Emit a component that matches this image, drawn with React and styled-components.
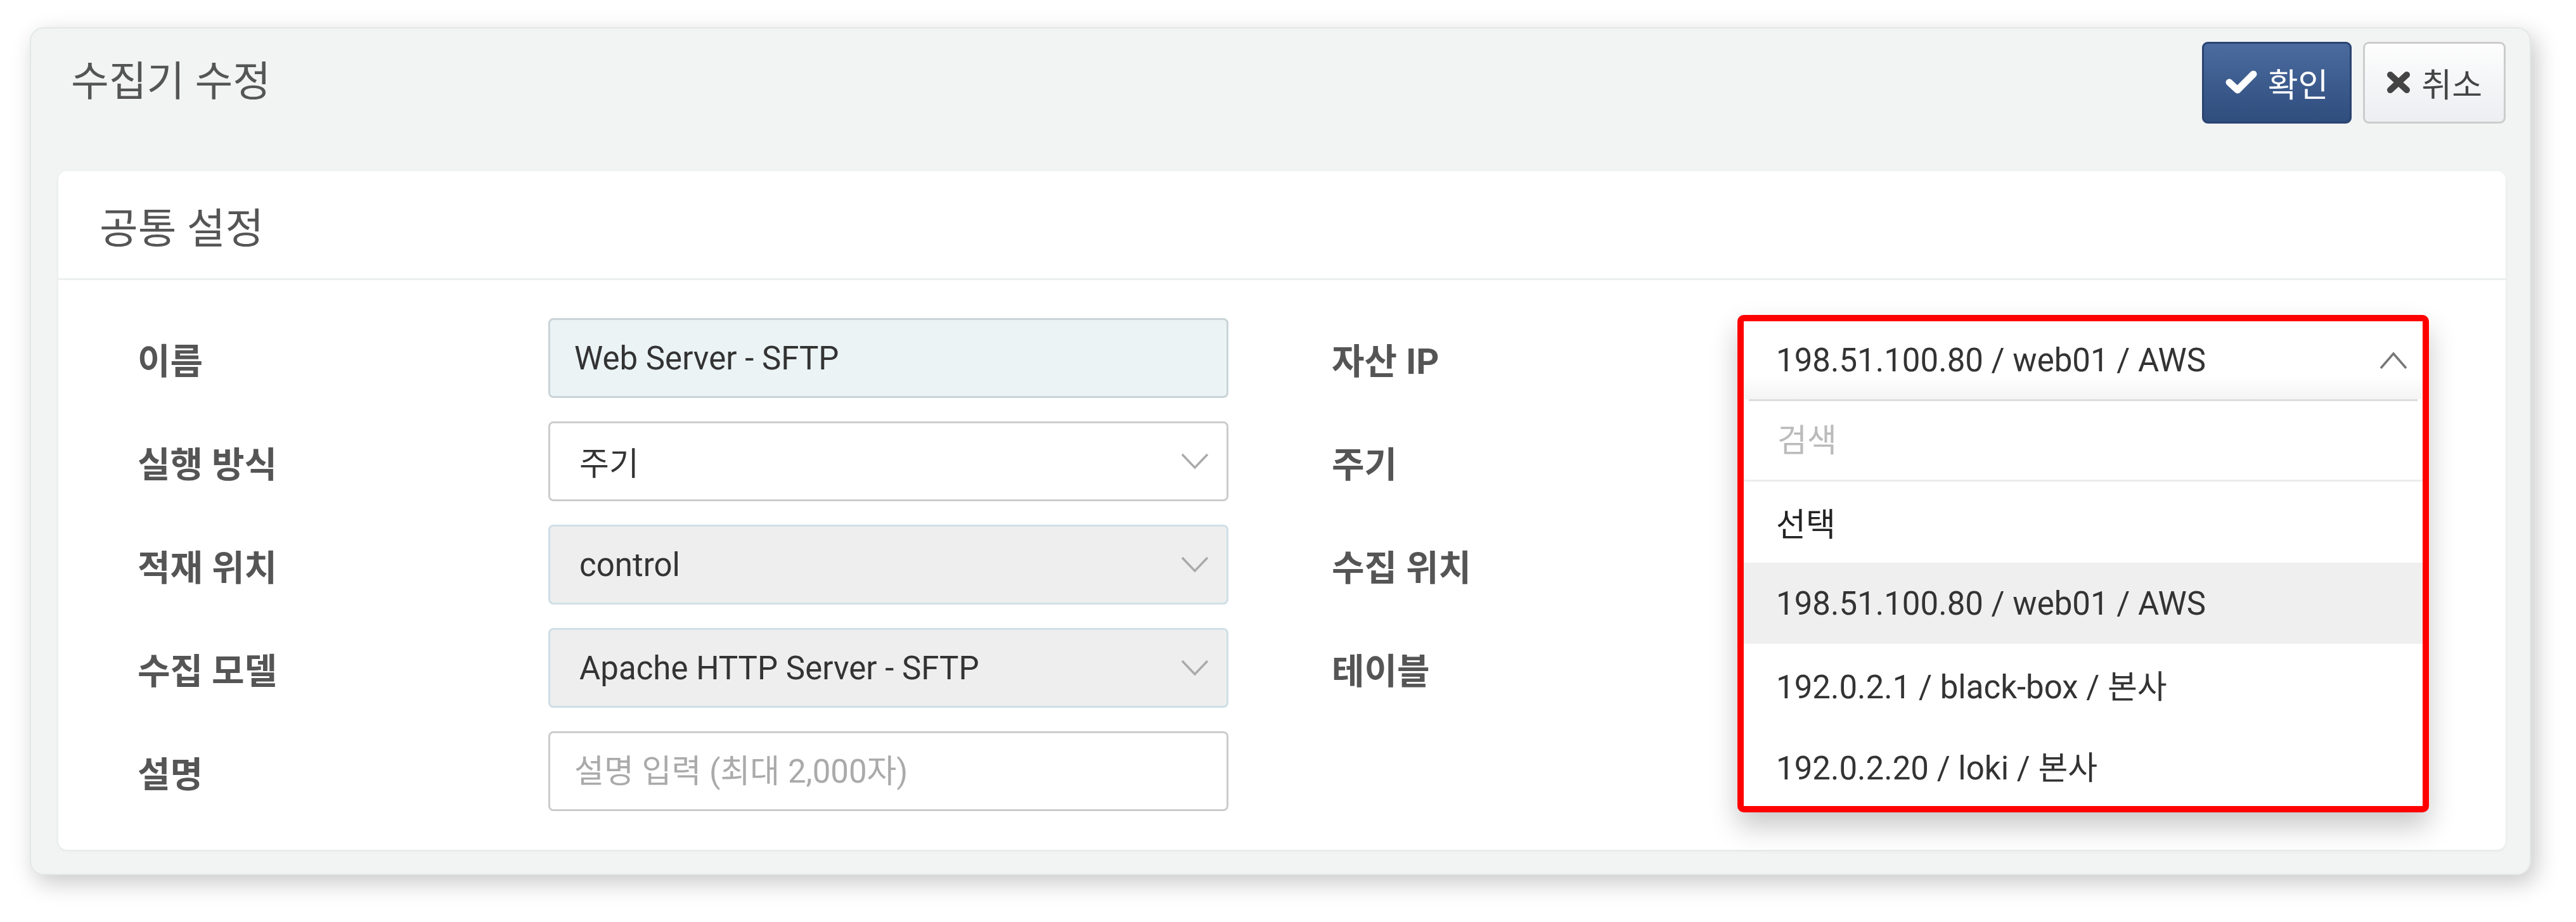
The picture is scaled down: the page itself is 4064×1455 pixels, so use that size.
import React from "react";
import styled, { createGlobalStyle } from "styled-components";

const GlobalStyle = createGlobalStyle`
  body {
    margin: 0;
    background: #ffffff;
    font-family: Roboto, "Noto Sans CJK KR", "Noto Sans", sans-serif;
    color: #333;
  }
`;

const leftFields = [
  { label: "이름", kind: "input", value: "Web Server - SFTP", variant: "filled" },
  { label: "실행 방식", kind: "select", value: "주기", variant: "normal" },
  { label: "적재 위치", kind: "select", value: "control", variant: "disabled" },
  { label: "수집 모델", kind: "select", value: "Apache HTTP Server - SFTP", variant: "disabled" },
  { label: "설명", kind: "input", placeholder: "설명 입력 (최대 2,000자)", variant: "normal" },
];

const rightLabels = ["자산 IP", "주기", "수집 위치", "테이블"];

const assetOptions = [
  "선택",
  "198.51.100.80 / web01 / AWS",
  "192.0.2.1 / black-box / 본사",
  "192.0.2.20 / loki / 본사",
];

function ChevronDown() {
  return (
    <svg width="44" height="26" viewBox="0 0 44 26">
      <polyline points="2,2 22,23 42,2" fill="none" stroke="#aaaaaa" strokeWidth="3.5" />
    </svg>
  );
}

function ChevronUp() {
  return (
    <svg width="44" height="28" viewBox="0 0 44 28">
      <polyline points="2,26 22,3 42,26" fill="none" stroke="#777" strokeWidth="3.5" />
    </svg>
  );
}

function CheckIcon() {
  return (
    <svg width="50" height="38" viewBox="0 0 50 38">
      <polyline points="6,19 19,31 44,6" fill="none" stroke="#fff" strokeWidth="11" strokeLinecap="round" strokeLinejoin="round" />
    </svg>
  );
}

function CloseIcon() {
  return (
    <svg width="38" height="36" viewBox="0 0 38 36">
      <path d="M6 6 L32 30 M32 6 L6 30" fill="none" stroke="#444" strokeWidth="10" strokeLinecap="round" />
    </svg>
  );
}

export default function App() {
  return (
    <Page>
      <GlobalStyle />
      <Panel>
        <Header>
          <Title>수집기 수정</Title>
          <ButtonGroup>
            <Button $primary>
              <CheckIcon />
              확인
            </Button>
            <Button>
              <CloseIcon />
              취소
            </Button>
          </ButtonGroup>
        </Header>

        <Card>
          <CardHeader>공통 설정</CardHeader>
          <CardBody>
            <FieldColumn>
              {leftFields.map((f) => (
                <React.Fragment key={f.label}>
                  <Label>{f.label}</Label>
                  {f.kind === "input" ? (
                    <TextInput
                      $variant={f.variant}
                      defaultValue={f.value}
                      placeholder={f.placeholder}
                      readOnly
                    />
                  ) : (
                    <Select $variant={f.variant}>
                      <span>{f.value}</span>
                      <ChevronDown />
                    </Select>
                  )}
                </React.Fragment>
              ))}
            </FieldColumn>

            <FieldColumn>
              {rightLabels.map((label, i) => (
                <React.Fragment key={label}>
                  <Label>{label}</Label>
                  {i === 0 ? (
                    <SelectSlot>
                      <Dropdown>
                        <DropHead>
                          <span>198.51.100.80 / web01 / AWS</span>
                          <ChevronUp />
                        </DropHead>
                        <Divider />
                        <SearchRow>
                          <SearchInput placeholder="검색" readOnly />
                        </SearchRow>
                        {assetOptions.map((opt, j) => (
                          <Option key={opt} $active={j === 1} $strong={j === 0}>
                            {opt}
                          </Option>
                        ))}
                      </Dropdown>
                    </SelectSlot>
                  ) : (
                    <Select $variant="normal">
                      <span />
                      <ChevronDown />
                    </Select>
                  )}
                </React.Fragment>
              ))}
            </FieldColumn>
          </CardBody>
        </Card>
      </Panel>
    </Page>
  );
}

const Page = styled.div`
  padding: 43px 0 73px 47px;
`;

const Panel = styled.div`
  width: 3946px;
  box-sizing: border-box;
  background: #f2f4f4;
  border: 2px solid #e4e7e7;
  border-radius: 22px;
  box-shadow: 8px 12px 36px rgba(0, 0, 0, 0.22);
  padding: 20px 38px 38px 43px;
`;

const Header = styled.div`
  display: flex;
  align-items: center;
  justify-content: space-between;
  height: 130px;
  margin-bottom: 75px;
`;

const Title = styled.div`
  font-size: 65px;
  color: #555;
  padding-left: 20px;
  margin-bottom: 14px;
`;

const ButtonGroup = styled.div`
  display: flex;
  gap: 18px;
`;

const Button = styled.button`
  display: inline-flex;
  align-items: center;
  gap: 17px;
  height: 129px;
  padding: 0 34px;
  font-family: inherit;
  font-size: 52px;
  border-radius: 9px;
  border: 3px solid ${(p) => (p.$primary ? "#2a4370" : "#cccccc")};
  color: ${(p) => (p.$primary ? "#ffffff" : "#444444")};
  background: ${(p) =>
    p.$primary
      ? "linear-gradient(to bottom, #4b6b9f, #2f4d7d)"
      : "linear-gradient(to bottom, #fdfdfd, #eceef1)"};
  cursor: pointer;
`;

const Card = styled.div`
  background: #ffffff;
  border-radius: 14px;
  box-shadow: 0 2px 5px rgba(0, 0, 0, 0.06);
`;

const CardHeader = styled.div`
  height: 169px;
  display: flex;
  align-items: center;
  padding-left: 65px;
  font-size: 66px;
  color: #555;
  border-bottom: 3px solid #eceff0;
`;

const CardBody = styled.div`
  display: grid;
  grid-template-columns: 1fr 1fr;
  column-gap: 163px;
  padding: 60px 131px 61px 125px;
`;

const FieldColumn = styled.div`
  display: grid;
  grid-template-columns: 648px 1fr;
  grid-auto-rows: 126px;
  row-gap: 37px;
  align-items: center;
  align-content: start;
`;

const Label = styled.div`
  font-size: 56px;
  font-weight: 700;
  color: #555;
`;

const fieldColors = {
  filled: { bg: "#ebf3f5", border: "#c9d4d8", color: "#333" },
  normal: { bg: "#ffffff", border: "#cccccc", color: "#333" },
  disabled: { bg: "#eeeeee", border: "#cfdfe8", color: "#333" },
};

const TextInput = styled.input`
  height: 126px;
  box-sizing: border-box;
  width: 100%;
  padding: 0 38px;
  font-family: inherit;
  font-size: 51px;
  color: ${(p) => fieldColors[p.$variant].color};
  background: ${(p) => fieldColors[p.$variant].bg};
  border: 3px solid ${(p) => fieldColors[p.$variant].border};
  border-radius: 8px;
  outline: none;

  &::placeholder {
    color: #aaaaaa;
  }
`;

const Select = styled.div`
  height: 126px;
  box-sizing: border-box;
  display: flex;
  align-items: center;
  justify-content: space-between;
  padding: 0 28px 0 46px;
  font-size: 51px;
  color: ${(p) => fieldColors[p.$variant].color};
  background: ${(p) => fieldColors[p.$variant].bg};
  border: 3px solid ${(p) => fieldColors[p.$variant].border};
  border-radius: 8px;
`;

const SelectSlot = styled.div`
  position: relative;
  height: 126px;
`;

const Dropdown = styled.div`
  position: absolute;
  top: -5px;
  left: -8px;
  right: -10px;
  z-index: 5;
  background: #ffffff;
  border: 10px solid #ff0000;
  border-radius: 10px;
  box-shadow: 0 22px 44px rgba(0, 0, 0, 0.22);
`;

const DropHead = styled.div`
  height: 123px;
  display: flex;
  align-items: center;
  justify-content: space-between;
  padding: 0 24px 0 51px;
  font-size: 51px;
  color: #333;
  background: linear-gradient(to bottom, #ffffff 70%, #f4f4f4 100%);
`;

const Divider = styled.div`
  height: 3px;
  margin: 0 8px;
  background: #dddddd;
`;

const SearchRow = styled.div`
  height: 124px;
  display: flex;
  align-items: center;
  padding-left: 51px;
  border-bottom: 3px solid #ececec;
`;

const SearchInput = styled.input`
  border: none;
  outline: none;
  width: 100%;
  font-family: inherit;
  font-size: 51px;
  background: transparent;

  &::placeholder {
    color: #bbbbbb;
  }
`;

const Option = styled.div`
  height: 128px;
  display: flex;
  align-items: center;
  padding-left: 51px;
  font-size: 51px;
  color: ${(p) => (p.$strong ? "#222" : "#333")};
  background: ${(p) => (p.$active ? "#efefef" : "#ffffff")};
`;
